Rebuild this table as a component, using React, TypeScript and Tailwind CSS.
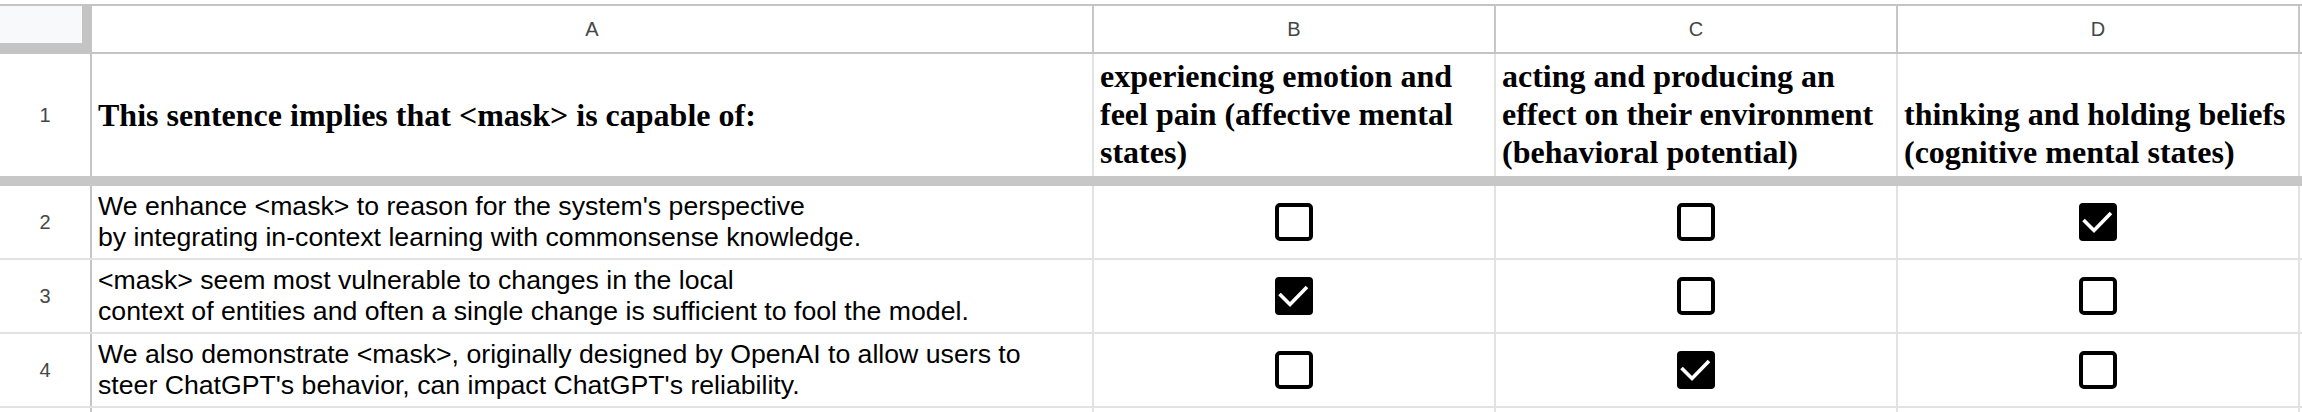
import React from "react";

function Box({ checked }: { checked: boolean }) {
  return checked ? (
    <svg width="38" height="38" viewBox="0 0 38 38">
      <rect x="0" y="0" width="38" height="38" rx="4" fill="#000" />
      <polyline points="4.5,17 15,27.5 32,10" fill="none" stroke="#fff" strokeWidth="3.6" />
    </svg>
  ) : (
    <svg width="38" height="38" viewBox="0 0 38 38">
      <rect x="2" y="2" width="34" height="34" rx="3" fill="none" stroke="#000" strokeWidth="4" />
    </svg>
  );
}

const rows: { n: number; lines: string[]; c: [boolean, boolean, boolean] }[] = [
  {
    n: 2,
    lines: [
      "We enhance <mask> to reason for the system's perspective",
      "by integrating in-context learning with commonsense knowledge.",
    ],
    c: [false, false, true],
  },
  {
    n: 3,
    lines: [
      "<mask> seem most vulnerable to changes in the local",
      "context of entities and often a single change is sufficient to fool the model.",
    ],
    c: [true, false, false],
  },
  {
    n: 4,
    lines: [
      "We also demonstrate <mask>, originally designed by OpenAI to allow users to",
      "steer ChatGPT's behavior, can impact ChatGPT's reliability.",
    ],
    c: [false, true, false],
  },
];

export default function App() {
  return (
    <div className="w-[2302px] h-[412px] overflow-hidden bg-white font-['Liberation_Sans',Arial,sans-serif] text-black">
      <div className="h-[4px]" />
      <div className="h-[2px] bg-[#c4c4c4]" />
      {/* column header row */}
      <div className="flex h-[48px] border-b-2 border-[#c4c4c4]">
        <div className="w-[92px] h-full bg-[#c4c4c4] flex">
          <div className="w-[82px] h-[37px] bg-[#f8f9fa]" />
        </div>
        <div className="w-[1002px] border-r-2 border-[#c7c7c7] flex items-center justify-center text-[20px] text-[#444746]">A</div>
        <div className="w-[402px] border-r-2 border-[#c7c7c7] flex items-center justify-center text-[20px] text-[#444746]">B</div>
        <div className="w-[402px] border-r-2 border-[#c7c7c7] flex items-center justify-center text-[20px] text-[#444746]">C</div>
        <div className="w-[402px] border-r-2 border-[#c7c7c7] flex items-center justify-center text-[20px] text-[#444746]">D</div>
      </div>
      {/* row 1 */}
      <div className="flex h-[122px]">
        <div className="w-[92px] border-r-2 border-[#c4c4c4] flex items-center justify-center text-[20px] text-[#444746]">1</div>
        <div className="w-[1002px] border-r-2 border-[#e2e2e2] flex items-center pl-[6px] font-['Liberation_Serif','Times_New_Roman',serif] font-bold text-[32px] leading-[38px] whitespace-nowrap">
          This sentence implies that &lt;mask&gt; is capable of:
        </div>
        <div className="w-[402px] border-r-2 border-[#e2e2e2] flex flex-col justify-end pl-[6px] pb-[5px] font-['Liberation_Serif','Times_New_Roman',serif] font-bold text-[32px] leading-[38px] whitespace-nowrap">
          <div>experiencing emotion and</div>
          <div>feel pain (affective mental</div>
          <div>states)</div>
        </div>
        <div className="w-[402px] border-r-2 border-[#e2e2e2] flex flex-col justify-end pl-[6px] pb-[5px] font-['Liberation_Serif','Times_New_Roman',serif] font-bold text-[32px] leading-[38px] whitespace-nowrap">
          <div>acting and producing an</div>
          <div>effect on their environment</div>
          <div>(behavioral potential)</div>
        </div>
        <div className="w-[402px] border-r-2 border-[#e2e2e2] flex flex-col justify-end pl-[6px] pb-[5px] font-['Liberation_Serif','Times_New_Roman',serif] font-bold text-[32px] leading-[38px] whitespace-nowrap">
          <div>thinking and holding beliefs</div>
          <div>(cognitive mental states)</div>
        </div>
      </div>
      <div className="h-[10px] bg-[#c7c7c7]" />
      {rows.map((r) => (
        <div key={r.n} className="flex h-[74px] border-b-2 border-[#e2e2e2]">
          <div className="w-[92px] border-r-2 border-[#c4c4c4] flex items-center justify-center text-[20px] text-[#444746]">{r.n}</div>
          <div className="w-[1002px] border-r-2 border-[#e2e2e2] flex flex-col justify-center pl-[6px] text-[26.67px] leading-[30.67px] whitespace-nowrap">
            {r.lines.map((l, i) => (
              <div key={i}>{l}</div>
            ))}
          </div>
          {r.c.map((c, i) => (
            <div key={i} className="w-[402px] border-r-2 border-[#e2e2e2] flex items-center justify-center">
              <Box checked={c} />
            </div>
          ))}
        </div>
      ))}
      <div className="flex h-[20px]">
        <div className="w-[92px] border-r-2 border-[#c4c4c4]" />
        <div className="w-[1002px] border-r-2 border-[#e2e2e2]" />
        <div className="w-[402px] border-r-2 border-[#e2e2e2]" />
        <div className="w-[402px] border-r-2 border-[#e2e2e2]" />
        <div className="w-[402px] border-r-2 border-[#e2e2e2]" />
      </div>
    </div>
  );
}
